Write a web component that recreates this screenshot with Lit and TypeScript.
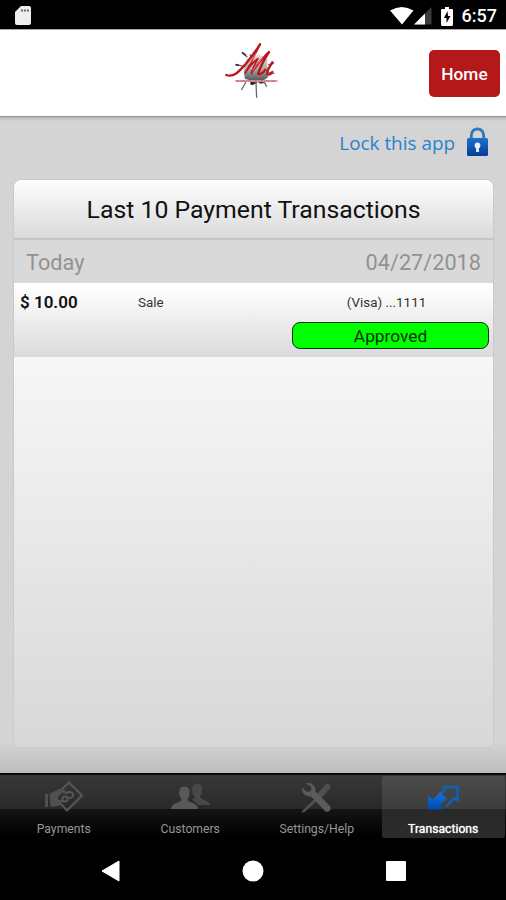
import { LitElement, html, css, svg } from "lit";
import { customElement, property } from "lit/decorators.js";

const icons: Record<string, unknown> = {
  payments: svg`
    <path d="M12 12 24 .500 37 13.500 22 28.500 12 18" fill="none" stroke="#555" stroke-width="2.200"/>
    <path d="M0 12h3v13H0zM4.500 12 14 7l6 1 3 4-6-1.500-4 5 .5 3 3-1 1 2.500-4 4-8 1z" fill="#505050"/>
    <circle cx="20" cy="17" r="2.600" fill="none" stroke="#5a5a5a" stroke-width="1.800"/>
    <path d="M21 12c2-3 6-2.500 7 0s-1 4-4.500 3.500" fill="none" stroke="#5a5a5a" stroke-width="1.800"/>`,
  customers: svg`
    <path d="M26 1.500c4 0 5.500 3 5 7.500-.3 3-1.500 4-2 6 1 3.500 9 2.500 10 8H27c-2-3.500-5-4-6-5.500 3-1 3-2 2.500-3-2-2-2.500-4-2.500-6 0-4 1.500-7 5-7z" fill="#484848"/>
    <path d="M13.500 4.500c4 0 5.500 3 5 7-.3 3-1.500 4-2 6C17 21 26.500 20 27 27H0c.5-7 10-6 10.500-9.500-.5-2-2-3-2.300-6-.4-4 1.300-7 5.300-7z" fill="#595959"/>`,
  settings: svg`
    <path d="m1 29 12.500-12 2.500 2L3.500 30 .5 30.500zM14 14.500 25 2c2-2 6 2 4 4.500L18 18.500z" fill="#515151"/>
    <path d="M5 1.500c4-1.500 10 1.500 9.500 8L29 24c2.500 3-1.500 7.500-5 5L10 14.500C5 15 0 11 1 5.500l5 4.500 4-1 .5-4z" fill="#5b5b5b"/>
    <path d="m22 9 5-6M24 10l5-5" stroke="#484848" stroke-width="1" fill="none"/>`,
  transactions: svg`
    <defs><linearGradient id="blue" x2="0" y2="1"><stop stop-color="#1276d2"/><stop offset="1" stop-color="#0048b8"/></linearGradient></defs>
    <path d="M13 8.500 16.500 5.500V2H29.500V15.500L26 13 18 22" fill="none" stroke="#0c62b5" stroke-width="2.600"/>
    <path d="M0 24.500V10.500L5 14.500 12 7 19 13.500 12 20.500 15 24.500Z" fill="url(#blue)"/>`,
};

@customElement("tab-item")
class TabItem extends LitElement {
  @property() label = "";
  @property() icon = "";
  @property({ type: Boolean, reflect: true }) active = false;

  static styles = css`
    :host {
      display: flex; flex-direction: column; align-items: center;
      box-sizing: border-box; margin: 1px 1px 0 2px; height: 62px; padding-top: 6px;
      border-radius: 3px; color: #969696;
      font: 12.200px/14px Roboto, sans-serif;
    }
    :host([active]) {
      color: #fff; text-shadow: 0 0 1px #fff;
      background: linear-gradient(#4c4c4c, #3d3d3d 33px, #292929 33px, #2b2b2b);
    }
    svg { display: block; width: 40px; height: 32px; overflow: visible; }
    .label { margin-top: 8px; white-space: nowrap; }
  `;

  render() {
    const dx: Record<string, number> = { payments: 1, customers: 1, settings: 4, transactions: 5 };
    const dy = this.icon === "transactions" ? 3 : 0;
    return html`
      <svg viewBox="0 0 40 32"><g transform="translate(${dx[this.icon] ?? 0} ${dy})">${icons[this.icon]}</g></svg>
      <span class="label">${this.label}</span>`;
  }
}

@customElement("app-root")
class AppRoot extends LitElement {
  static styles = css`
    :host {
      display: flex; flex-direction: column; width: 506px; height: 900px; overflow: hidden;
      background: #000; color: #111; font-family: Roboto, sans-serif;
    }
    svg { display: block; overflow: visible; }
    .status { height: 29px; flex: none; box-sizing: border-box; padding: 3px 9px 0 15px; display: flex; align-items: center; color: #fff; }
    .status .sd { margin-right: auto; }
    .clock { font: 500 18px/24px Roboto, sans-serif; margin-left: 8px; }
    .header {
      height: 87px; flex: none; box-sizing: border-box; background: #fff;
      border-top: 1px solid #aaa; display: grid; grid-template-columns: 1fr 60px 1fr;
      align-items: center; padding: 0 6px 0 0;
    }
    .logo { grid-column: 2; }
    .home {
      justify-self: end; width: 71px; height: 47px; border: 0; border-radius: 5px; padding: 0;
      background: #b41818; color: #fff; font: 500 17.300px/49px Roboto, sans-serif; text-align: center;
    }
    .body {
      height: 657px; flex: none; box-sizing: border-box; padding: 10px 13px 0; border-top: 1px solid #949494;
      background: linear-gradient(#b4b4b4, #d4d4d4 4px, #d4d4d4 625px, #bcbcbc);
    }
    .lock { display: flex; justify-content: flex-end; align-items: center; height: 32px; margin: 0 5px 20px; gap: 12px; color: #2783cd; }
    .lock span { font: 18.900px/34px "Open Sans", sans-serif; }
    .card {
      box-sizing: border-box; width: 481px; height: 569px; border: 1px solid #c9c9c9; border-radius: 8px;
      overflow: hidden; background: #d9d9d9; display: flex; flex-direction: column;
    }
    .title {
      height: 60px; flex: none; box-sizing: border-box; border-bottom: 2px solid #c5c5c5;
      background: linear-gradient(#fdfdfd, #dadada); font-size: 24.800px; line-height: 60px;
      text-align: center; white-space: nowrap;
    }
    .date {
      height: 43px; flex: none; display: flex; justify-content: space-between; padding: 0 12px;
      font-size: 21.700px; line-height: 46px; color: #929292;
    }
    .row {
      height: 74px; flex: none; box-sizing: border-box; padding: 9px 4px 0 6px;
      background: linear-gradient(#fff, #f7f7f7 25%, #dadada);
      display: grid; grid-template-columns: 118px 154px 197px; grid-template-rows: 20px 10px 27px; font-size: 13.400px; line-height: 21px;
    }
    .amount { font-size: 17px; font-weight: 600; line-height: 21px; }
    .sale, .visa { color: #333; }
    .visa { text-align: center; padding-right: 8px; }
    .badge {
      grid-column: 3; grid-row: 3; box-sizing: border-box; height: 27px; border: 1.500px solid #073507;
      border-radius: 8px; background: #00ff00; text-align: center; font-size: 17.300px; line-height: 26px; color: #063006;
    }
    .rest { flex: 1; background: linear-gradient(#f7f7f7, #d9d9d9 95%); }
    .tabs {
      height: 66px; flex: none; box-sizing: border-box; border-top: 2px solid #080808;
      display: grid; grid-template-columns: repeat(4, 1fr);
      background: linear-gradient(#383838, #292929 34px, #151515 34px, #000 61px);
    }
    .nav { flex: 1; display: flex; justify-content: center; align-items: center; gap: 122px; padding-top: 3px; }
  `;

  render() {
    return html`
      <div class="status">
        <svg class="sd" width="16" height="20" viewBox="0 0 16 20"><path d="M6 0h8q2 0 2 2v15q0 2-2 2H2q-2 0-2-2V6z" fill="#eee"/><path d="M6 4.500h8" stroke="#666" stroke-width="2" stroke-dasharray="2 1"/></svg>
        <svg width="24" height="18" viewBox="0 0 24 18"><path d="M0 3.500Q12-3.500 23.500 3.500L12 17.500z" fill="#fff"/></svg>
        <svg width="18" height="18" viewBox="0 0 18 18"><path d="M0 17.500 17.500 0v17.500z" fill="#3c3c3c"/><path d="M0 17.500 11 6.500v11z" fill="#fff"/></svg>
        <svg width="22" height="19" viewBox="-9 0 22 19"><path d="M4 0h4v2h3q1 0 1 1v14q0 2-1 2H1q-1 0-1-2V3q0-1 1-1h3z" fill="#fff"/><path d="M6.500 4 3 11h2.500v5L9.500 9H7z" fill="#000"/></svg>
        <span class="clock">6:57</span>
      </div>
      <div class="header">
        <svg class="logo" width="60" height="60" viewBox="60 40 180 180">
          <defs><linearGradient id="ink" x2="0" y2="1"><stop stop-color="#e6e6e6"/><stop offset=".5" stop-color="#aaa"/><stop offset="1" stop-color="#3c3c3c"/></linearGradient></defs>
          <path d="m140 85 15 5 20-18 12 8 16 10-2 18 6 14-4 22-12 8-14 2-12 10-14-12-16-4-4-20z" fill="url(#ink)"/>
          <path d="m126 68 16 15M106 105l28 5M138 157l-14 24M168 158l2 46M192 155l8 16M205 106l17-6M206 128l17 4M193 83l7-13M150 74l4 12" stroke="#696969" stroke-width="4" fill="none"/>
          <path d="m126 68 12 9M107 105l10 2" stroke="#333" stroke-width="5"/>
          <ellipse cx="157" cy="161" rx="7" ry="5" fill="#222"/><ellipse cx="184" cy="158" rx="9" ry="4" fill="#444"/>
          <g fill="none" stroke="#bd161c" stroke-linecap="round" stroke-linejoin="round">
            <path d="M79 136C102 145 120 122 137 103Q158 79 180 44" stroke-width="7"/>
            <path d="M180 44Q157 92 136 130M136 130Q151 103 174 87Q160 110 154 132" stroke-width="5"/>
            <path d="M156 126Q178 95 207 67Q184 103 174 132Q184 137 196 120" stroke-width="7"/>
            <path d="M217 98Q195 132 204 134Q210 137 217 127" stroke-width="7"/>
          </g>
          <path d="m147 104 22-33M157 122l31-38" stroke="#f3c9cc" stroke-width="2"/>
          <path d="M106 154h126" stroke="#d79da4" stroke-width="6"/>
          <path d="M109 154h120" stroke="#b0606a" stroke-width="3" stroke-dasharray="8 4 3 3"/>
        </svg>
        <button class="home">Home</button>
      </div>
      <div class="body">
        <div class="lock"><span>Lock this app</span>
          <svg width="21" height="30" viewBox="0 0 22 30" preserveAspectRatio="none">
            <defs><linearGradient id="lockFill" x2="0" y2="1"><stop stop-color="#1972cb"/><stop offset="1" stop-color="#073c9b"/></linearGradient></defs>
            <path d="M4.500 12V8C4.500-1.500 17.500-1.500 17.500 8V12" fill="none" stroke="#2f78bb" stroke-width="3"/>
            <rect y="10" width="22" height="18" rx="1.500" fill="url(#lockFill)"/>
            <circle cx="11" cy="17.500" r="3" fill="#e6eef8"/><path d="M9.500 19h3v5h-3z" fill="#e6eef8"/>
          </svg>
        </div>
        <div class="card">
          <div class="title">Last 10 Payment Transactions</div>
          <div class="date"><span>Today</span><span>04/27/2018</span></div>
          <div class="row">
            <span class="amount">$ 10.00</span><span class="sale">Sale</span><span class="visa">(Visa) ...1111</span>
            <div class="badge">Approved</div>
          </div>
          <div class="rest"></div>
        </div>
      </div>
      <div class="tabs">
        <tab-item icon="payments" label="Payments"></tab-item>
        <tab-item icon="customers" label="Customers"></tab-item>
        <tab-item icon="settings" label="Settings/Help"></tab-item>
        <tab-item icon="transactions" label="Transactions" active></tab-item>
      </div>
      <div class="nav">
        <svg width="19" height="22" viewBox="0 0 19 22"><path d="M18 1v20L1 11z" fill="#fff" stroke="#fff"/></svg>
        <svg width="22" height="22" viewBox="0 0 22 22"><circle cx="11" cy="11" r="10.500" fill="#fff"/></svg>
        <svg width="20" height="20" viewBox="0 0 20 20"><rect width="20" height="20" rx="1" fill="#fff"/></svg>
      </div>`;
  }
}
